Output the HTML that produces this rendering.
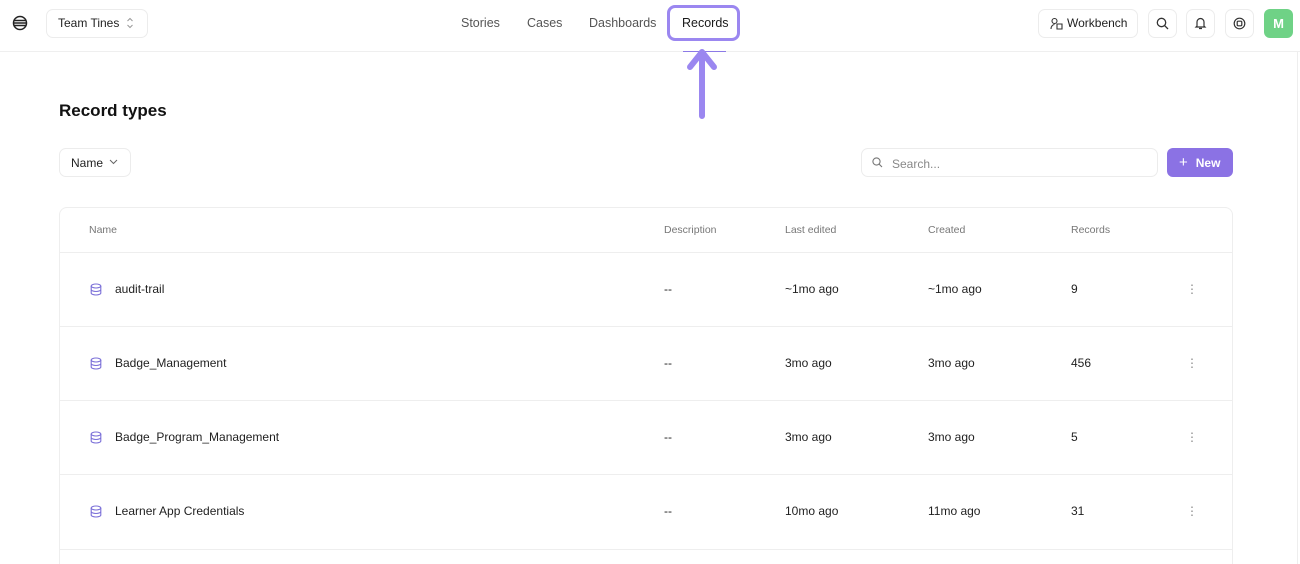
<!DOCTYPE html>
<html><head><meta charset="utf-8"><style>
*{box-sizing:border-box;margin:0;padding:0}
html,body{width:1300px;height:564px;overflow:hidden}
body{background:#fff;font-family:"Liberation Sans",sans-serif;color:#1a1a1a;position:relative}
.abs{position:absolute}
.top{position:absolute;left:0;top:0;width:1300px;height:52px;border-bottom:1px solid #efefef}
.btn{position:absolute;border:1px solid #ececec;border-radius:7px;background:#fff}
.nav{position:absolute;top:16px;font-size:12.5px;color:#555}
.t{position:absolute;font-size:12px}
.row{position:absolute;left:60px;width:1172px;height:74px;border-top:1px solid #eee}
.row span{position:absolute;top:29px;font-size:12px;color:#1f1f1f}
</style></head><body>
<div class="top"></div>
<svg class="abs" style="left:12px;top:15px" width="16" height="16" viewBox="0 0 16 16" fill="none" stroke="#222" stroke-width="1.5"><circle cx="8" cy="8" r="6.5"/><line x1="2" y1="5.5" x2="14" y2="5.5"/><line x1="1.5" y1="8" x2="14.5" y2="8"/><line x1="2" y1="10.5" x2="14" y2="10.5"/></svg>
<div class="btn" style="left:46px;top:9px;width:102px;height:29px"></div>
<div class="t" style="left:58px;top:16px;font-size:12px;color:#222">Team Tines</div>
<svg class="abs" style="left:126px;top:17px" width="8" height="12" viewBox="0 0 8 12" fill="none" stroke="#999" stroke-width="1"><path d="M1.5 4L4 1.5L6.5 4M1.5 8L4 10.5L6.5 8"/></svg>
<div class="nav" style="left:461px">Stories</div>
<div class="nav" style="left:527px">Cases</div>
<div class="nav" style="left:589px">Dashboards</div>
<div class="abs" style="left:667px;top:5px;width:73px;height:36px;border:3.5px solid #9b87f0;border-radius:8px"></div>
<div class="nav" style="left:682px;color:#1a1a1a">Records</div>
<div class="abs" style="left:683px;top:51px;width:43px;height:1px;background:#8c7ae6"></div>
<svg class="abs" style="left:682px;top:42px" width="40" height="80" viewBox="0 0 40 80"><path d="M20 74 V10 M8 25 L20 10 L32 25" stroke="#9b87f0" stroke-width="6" stroke-linecap="round" stroke-linejoin="round" fill="none"/></svg>
<div class="btn" style="left:1038px;top:9px;width:100px;height:29px"></div>
<svg class="abs" style="left:1050px;top:17px" width="13" height="13" viewBox="0 0 13 13" fill="none" stroke="#333" stroke-width="1.1"><circle cx="4.5" cy="4" r="2.5"/><path d="M1 12c0-3 2-4.5 3.5-4.5M7 7h5v5H7z"/></svg>
<div class="t" style="left:1067px;top:16px;font-size:12px;color:#222">Workbench</div>
<div class="btn" style="left:1148px;top:9px;width:29px;height:29px"></div>
<svg class="abs" style="left:1156px;top:17px" width="13" height="13" viewBox="0 0 13 13" fill="none" stroke="#333" stroke-width="1.3"><circle cx="5.5" cy="5.5" r="4.2"/><line x1="8.6" y1="8.6" x2="12" y2="12"/></svg>
<div class="btn" style="left:1186px;top:9px;width:29px;height:29px"></div>
<svg class="abs" style="left:1194px;top:16px" width="13" height="14" viewBox="0 0 13 14" fill="none" stroke="#333" stroke-width="1.2"><path d="M3 10V6a3.5 3.5 0 017 0v4l1 1H2z M5 12.5h3"/></svg>
<div class="btn" style="left:1225px;top:9px;width:29px;height:29px"></div>
<svg class="abs" style="left:1233px;top:17px" width="13" height="13" viewBox="0 0 13 13" fill="none" stroke="#333" stroke-width="1.2"><circle cx="6.5" cy="6.5" r="5.3"/><rect x="4.2" y="4.2" width="4.6" height="4.6" rx="1"/></svg>
<div class="abs" style="left:1264px;top:9px;width:29px;height:29px;border-radius:6px;background:#6fd286;color:#fff;font-size:13px;font-weight:bold;text-align:center;line-height:29px">M</div>
<div class="abs" style="left:1297px;top:52px;width:1px;height:512px;background:#eee"></div>

<div class="t" style="left:59px;top:101px;font-size:17px;font-weight:bold;color:#111">Record types</div>
<div class="btn" style="left:59px;top:148px;width:72px;height:29px"></div>
<div class="t" style="left:71px;top:156px;font-size:12px;color:#222">Name</div>
<svg class="abs" style="left:109px;top:159px" width="9" height="6" viewBox="0 0 9 6" fill="none" stroke="#666" stroke-width="1"><path d="M1 1l3.5 3.5L8 1"/></svg>
<div class="btn" style="left:861px;top:148px;width:297px;height:29px"></div>
<svg class="abs" style="left:872px;top:157px" width="11" height="11" viewBox="0 0 11 11" fill="none" stroke="#777" stroke-width="1.1"><circle cx="4.5" cy="4.5" r="3.6"/><line x1="7.2" y1="7.2" x2="10" y2="10"/></svg>
<div class="t" style="left:892px;top:157px;color:#888">Search...</div>
<div class="abs" style="left:1167px;top:148px;width:66px;height:29px;border-radius:6px;background:#8b72e4;color:#fff;font-size:12px;font-weight:bold;line-height:29px;padding-left:12px"><span style="font-weight:normal;font-size:15px;margin-right:8px">+</span>New</div>

<div class="abs" style="left:59px;top:207px;width:1174px;height:357px;border:1px solid #eee;border-bottom:none;border-radius:8px 8px 0 0"></div>
<div class="t" style="left:89px;top:224px;font-size:10.5px;color:#777">Name</div>
<div class="t" style="left:664px;top:224px;font-size:10.5px;color:#777">Description</div>
<div class="t" style="left:785px;top:224px;font-size:10.5px;color:#777">Last edited</div>
<div class="t" style="left:928px;top:224px;font-size:10.5px;color:#777">Created</div>
<div class="t" style="left:1071px;top:224px;font-size:10.5px;color:#777">Records</div>

<div class="row" style="top:252px"><svg class="abs" style="left:30px;top:30px" width="12" height="13" viewBox="0 0 12 13" fill="none" stroke="#7b70d8" stroke-width="1.1"><ellipse cx="6" cy="3" rx="4.8" ry="2"/><path d="M1.2 3v7c0 1.1 2.1 2 4.8 2s4.8-.9 4.8-2V3M1.2 6.5c0 1.1 2.1 2 4.8 2s4.8-.9 4.8-2"/></svg><span style="left:55px">audit-trail</span><span style="left:604px">--</span><span style="left:725px">~1mo ago</span><span style="left:868px">~1mo ago</span><span style="left:1011px">9</span><span style="left:1126px;color:#888">⋮</span></div>
<div class="row" style="top:326px"><svg class="abs" style="left:30px;top:30px" width="12" height="13" viewBox="0 0 12 13" fill="none" stroke="#7b70d8" stroke-width="1.1"><ellipse cx="6" cy="3" rx="4.8" ry="2"/><path d="M1.2 3v7c0 1.1 2.1 2 4.8 2s4.8-.9 4.8-2V3M1.2 6.5c0 1.1 2.1 2 4.8 2s4.8-.9 4.8-2"/></svg><span style="left:55px">Badge_Management</span><span style="left:604px">--</span><span style="left:725px">3mo ago</span><span style="left:868px">3mo ago</span><span style="left:1011px">456</span><span style="left:1126px;color:#888">⋮</span></div>
<div class="row" style="top:400px"><svg class="abs" style="left:30px;top:30px" width="12" height="13" viewBox="0 0 12 13" fill="none" stroke="#7b70d8" stroke-width="1.1"><ellipse cx="6" cy="3" rx="4.8" ry="2"/><path d="M1.2 3v7c0 1.1 2.1 2 4.8 2s4.8-.9 4.8-2V3M1.2 6.5c0 1.1 2.1 2 4.8 2s4.8-.9 4.8-2"/></svg><span style="left:55px">Badge_Program_Management</span><span style="left:604px">--</span><span style="left:725px">3mo ago</span><span style="left:868px">3mo ago</span><span style="left:1011px">5</span><span style="left:1126px;color:#888">⋮</span></div>
<div class="row" style="top:474px;height:90px"><svg class="abs" style="left:30px;top:30px" width="12" height="13" viewBox="0 0 12 13" fill="none" stroke="#7b70d8" stroke-width="1.1"><ellipse cx="6" cy="3" rx="4.8" ry="2"/><path d="M1.2 3v7c0 1.1 2.1 2 4.8 2s4.8-.9 4.8-2V3M1.2 6.5c0 1.1 2.1 2 4.8 2s4.8-.9 4.8-2"/></svg><span style="left:55px">Learner App Credentials</span><span style="left:604px">--</span><span style="left:725px">10mo ago</span><span style="left:868px">11mo ago</span><span style="left:1011px">31</span><span style="left:1126px;color:#888">⋮</span><div class="abs" style="left:0;top:74px;width:1172px;height:1px;background:#eee"></div></div>
</body></html>
